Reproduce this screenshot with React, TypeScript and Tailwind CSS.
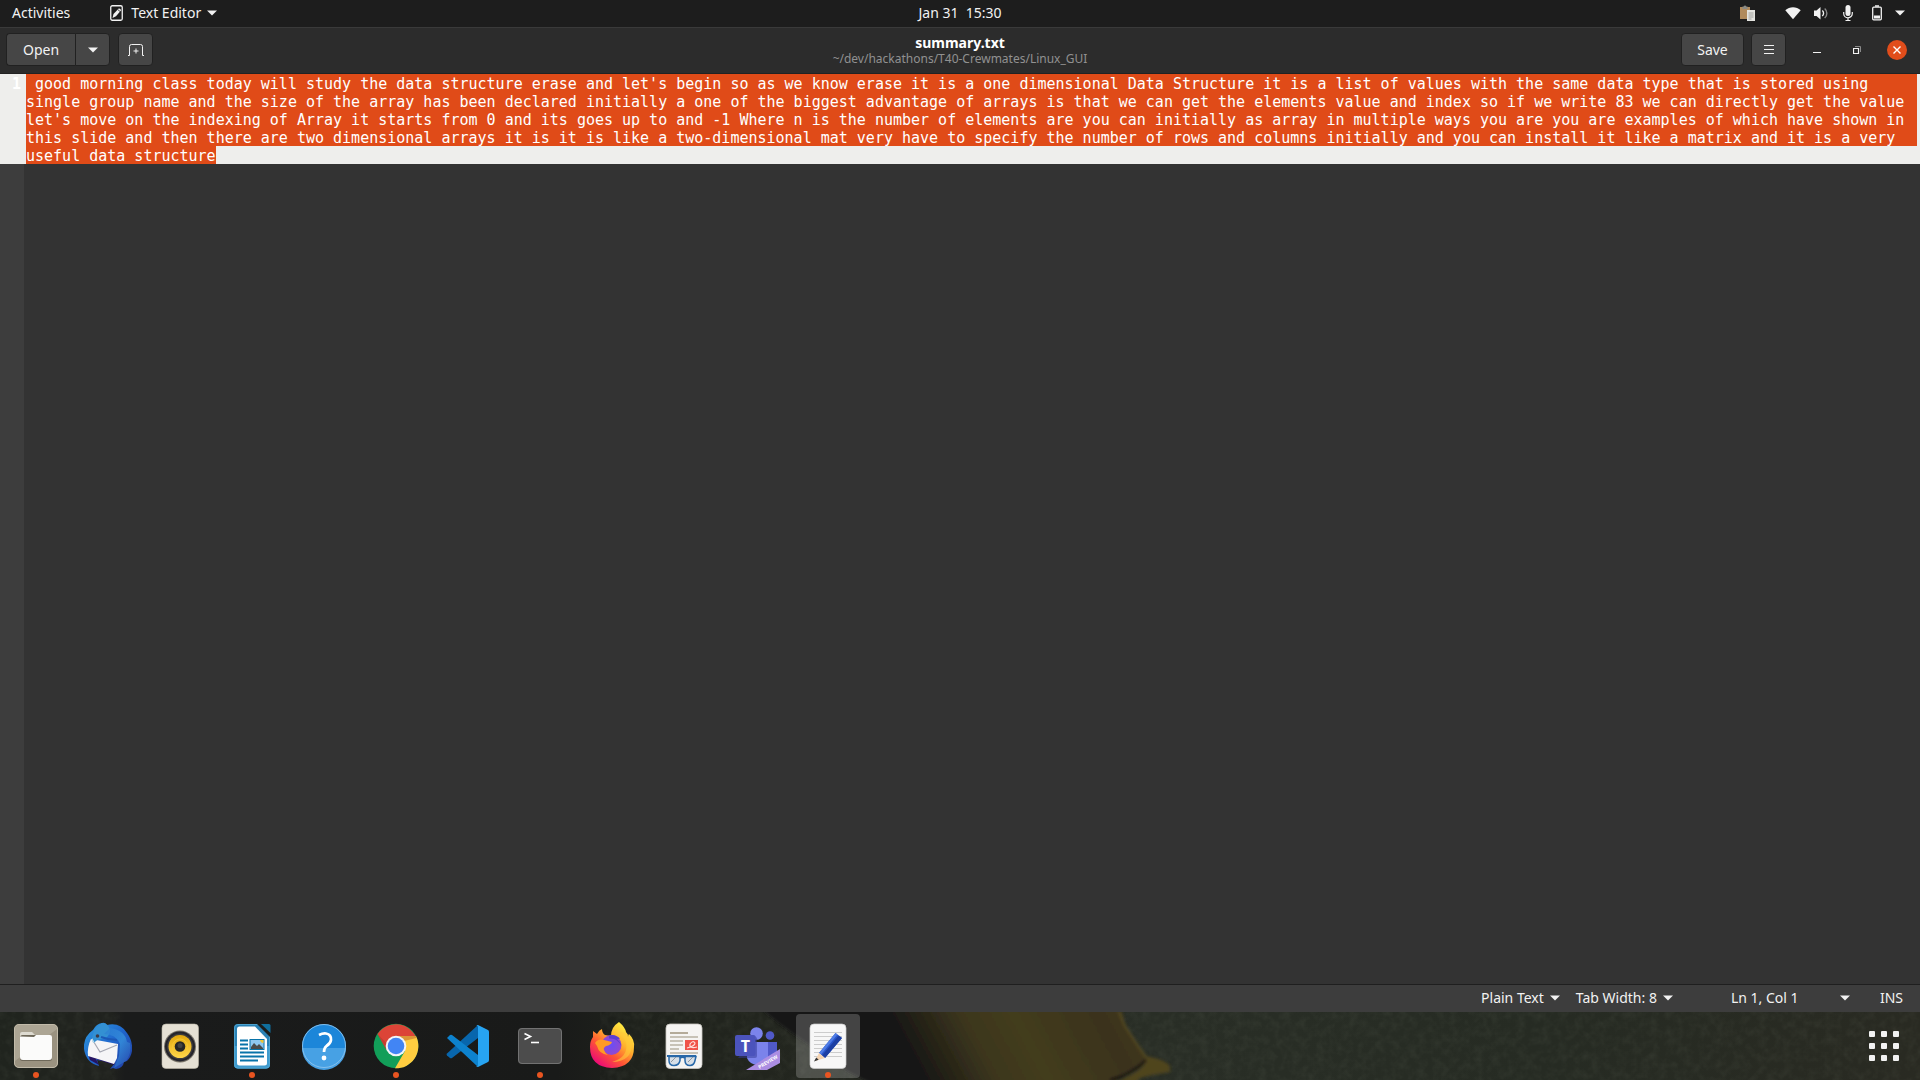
import { useState } from "react";
import type { ReactNode } from "react";

const INITIAL_TEXT =
  " good morning class today will study the data structure erase and let's begin so as we know erase it is a one dimensional Data Structure it is a list of values with the same data type that is stored using single group name and the size of the array has been declared initially a one of the biggest advantage of arrays is that we can get the elements value and index so if we write 83 we can directly get the value let's move on the indexing of Array it starts from 0 and its goes up to and -1 Where n is the number of elements are you can initially as array in multiple ways you are you are examples of which have shown in this slide and then there are two dimensional arrays it is it is like a two-dimensional mat very have to specify the number of rows and columns initially and you can install it like a matrix and it is a very useful data structure";

const Caret = () => (
  <svg width="10" height="6" viewBox="0 0 10 6" className="shrink-0" aria-hidden="true">
    <path d="M0 .5h10L5 5.5z" fill="currentColor" />
  </svg>
);

const TopBar = () => (
  <header className="grid h-7 shrink-0 grid-cols-[1fr_auto_1fr] items-center border-b border-[#3a3a3a] bg-[#1d1d1d] pb-px text-sm text-[#f2f2f2]">
    <div className="flex items-center gap-10 pl-3">
      <button>Activities</button>
      <button className="flex items-center gap-2">
        <svg width="13" height="16" viewBox="0 0 13 16" aria-hidden="true">
          <rect x=".75" y=".75" width="11.5" height="14.5" rx="1.5" fill="none" stroke="#f2f2f2" strokeWidth="1.3" />
          <path d="M2.5 13l1-4L9 3.3 11.3 5 6 11.3z" fill="#f2f2f2" />
          <path d="M8 4.8l2 1.6" stroke="#1d1d1d" strokeWidth=".8" />
        </svg>
        <span className="flex items-center gap-1.5">
          Text Editor
          <Caret />
        </span>
      </button>
    </div>
    <button className="whitespace-pre">Jan 31  15:30</button>
    <div className="flex items-center justify-end pr-[15px]">
      <svg width="15" height="16" viewBox="0 0 15 16" className="mr-[30px]" aria-hidden="true">
        <path d="M0 2h10v12H0z" fill="#b08a5c" />
        <path d="M2.5 1.5h1.2a1.4 1.4 0 012.6 0h1.2V4h-5z" fill="#8a8a84" />
        <path d="M7 5h8v11H7z" fill="#e4e4e0" />
        <path d="M8.5 8h5M8.5 10h5M8.5 12h5M8.5 14h3" stroke="#9a9a96" strokeWidth=".9" />
      </svg>
      <button aria-label="System menu" className="flex items-center">
        <svg width="16" height="16" viewBox="0 0 16 16" className="mr-3" aria-hidden="true">
          <path d="M.3 5.2C4.6 1.3 11.4 1.3 15.7 5.2L8 14.3z" fill="#f2f2f2" />
        </svg>
        <svg width="16" height="16" viewBox="0 0 16 16" className="mr-[14px]" aria-hidden="true">
          <path d="M1 5.5h2.5L7.5 2v12.5L3.500 11H1z" fill="#f2f2f2" />
          <path d="M9.3 5.5a3.6 3.6 0 010 5.5" fill="none" stroke="#f2f2f2" strokeWidth="1.4" />
          <path d="M11.7 3.4a6.5 6.5 0 010 9.7" fill="none" stroke="#8a8a8a" strokeWidth="1.4" />
        </svg>
        <svg width="10" height="16" viewBox="0 0 10 16" className="mr-[18px]" aria-hidden="true">
          <rect x="2.5" y="0" width="5" height="11" rx="2.5" fill="#f2f2f2" />
          <path d="M.7 7v1.5a4.3 4.3 0 008.6 0V7M5 13v2.5M2.5 15.5h5" fill="none" stroke="#f2f2f2" strokeWidth="1.2" />
        </svg>
        <svg width="12" height="16" viewBox="0 0 12 16" className="mr-3" aria-hidden="true">
          <rect x="1.700" y="2.2" width="8.6" height="12.6" rx="1" fill="none" stroke="#f2f2f2" strokeWidth="1.3" />
          <path d="M4 .3h4v1.5H4zM3 10.5h6v3H3z" fill="#f2f2f2" />
        </svg>
        <Caret />
      </button>
    </div>
  </header>
);

const BUTTON = "flex h-[33px] items-center justify-center border border-[#212121] bg-[#464646] text-[#f2f2f2]";

const HeaderBar = () => (
  <div className="grid h-[46px] shrink-0 grid-cols-[1fr_auto_1fr] border-b border-[#222] bg-[#2c2c2c] text-sm">
    <div className="flex items-start gap-2 pt-[5px] pl-1.5">
      <div className="flex">
        <button className={`${BUTTON} w-[69px] rounded-l border-r-0`}>Open</button>
        <button className={`${BUTTON} w-[35px] rounded-r`} aria-label="Recent files">
          <Caret />
        </button>
      </div>
      <button className={`${BUTTON} w-[35px] rounded`} aria-label="New tab">
        <svg width="16" height="14" viewBox="0 0 16 14" fill="none" stroke="#f2f2f2" aria-hidden="true">
          <path d="M0 12.5h1.5v-9a2 2 0 012-2h9a2 2 0 012 2v9H16M8 5.5v5M5.5 8h5" />
        </svg>
      </button>
    </div>
    <div className="pt-[6px] text-center">
      <h1 className="text-sm/[18px] font-bold text-white">summary.txt</h1>
      <p className="text-xs/[14px] text-[#919191]">~/dev/hackathons/T40-Crewmates/Linux_GUI</p>
    </div>
    <div className="flex items-start justify-end pt-[5px] pr-[13px]">
      <button className={`${BUTTON} mr-[7px] w-[63px] rounded`}>Save</button>
      <button className={`${BUTTON} mr-[21px] w-[35px] rounded`} aria-label="Menu">
        <svg width="10" height="11" viewBox="0 0 10 11" stroke="#f2f2f2" aria-hidden="true">
          <path d="M0 1.5h10M0 5.5h10M0 9.5h10" />
        </svg>
      </button>
      <div className="flex h-[33px] items-center gap-5">
        <button className="flex size-5 items-center justify-center" aria-label="Minimize">
          <svg width="8" height="8" viewBox="0 0 8 8" aria-hidden="true">
            <path d="M0 6.5h8" stroke="#f2f2f2" />
          </svg>
        </button>
        <button className="flex size-5 items-center justify-center" aria-label="Restore">
          <svg width="8" height="8" viewBox="0 0 8 8" fill="none" aria-hidden="true">
            <path d="M2 .5h5.5V6" stroke="#8a8a8a" />
            <path d="M.5 2.5h5v5h-5z" stroke="#f2f2f2" strokeWidth="1.2" />
          </svg>
        </button>
        <button className="flex size-5 items-center justify-center rounded-full bg-[#e14d1b]" aria-label="Close">
          <svg width="8" height="8" viewBox="0 0 8 8" aria-hidden="true">
            <path d="M.5.5l7 7M7.5.5l-7 7" stroke="#fff" strokeWidth="1.4" />
          </svg>
        </button>
      </div>
    </div>
  </div>
);

const Editor = () => {
  const [text, setText] = useState(INITIAL_TEXT);

  return (
    <main className="flex min-h-0 flex-1 flex-col bg-[#333]">
      <div className="flex bg-[#eeeeec] font-['DejaVu_Sans_Mono','Liberation_Mono',monospace] text-[15px]/[18px]">
        <div className="w-[26px] shrink-0 pt-px pr-[5px] text-right font-bold text-white">1</div>
        <div className="grid flex-1">
          {/* selection highlight: full lines, then the last partial one */}
          <div className="col-start-1 row-start-1 flex flex-col pr-[3px]" aria-hidden="true">
            <div className="flex-1 bg-[#e04b18]" />
            <div className="h-[18px] w-[21ch] bg-[#e04b18]" />
          </div>
          <textarea
            aria-label="Document"
            rows={5}
            spellCheck={false}
            value={text}
            onChange={(e) => setText(e.target.value)}
            className="col-start-1 row-start-1 block h-[90px] w-full resize-none overflow-hidden bg-transparent pt-px text-white outline-none"
          />
        </div>
      </div>
      <div className="w-6 flex-1 bg-[#3d3d3d]" />
    </main>
  );
};

const StatusBar = () => (
  <footer className="flex h-7 shrink-0 items-center justify-end border-t border-[#1f1f1f] bg-[#3d3d3d] pr-[17px] pb-0.5 text-sm text-[#f2f2f2]">
    <button className="mr-4 flex items-center gap-1.5">
      Plain Text
      <Caret />
    </button>
    <button className="mr-[58px] flex items-center gap-1.5">
      Tab Width: 8
      <Caret />
    </button>
    <button className="mr-[30px] flex w-[119px] items-center justify-between">
      Ln 1, Col 1
      <Caret />
    </button>
    <span>INS</span>
  </footer>
);

const Wallpaper = () => (
  <svg
    className="absolute inset-0 size-full"
    viewBox="0 0 1920 68"
    preserveAspectRatio="none"
    aria-hidden="true"
  >
    <defs>
      <linearGradient id="ground">
        <stop offset="0" stopColor="#20241e" />
        <stop offset=".058" stopColor="#20221e" />
        <stop offset=".065" stopColor="#1a1b1b" />
        <stop offset=".29" stopColor="#191a19" />
        <stop offset=".33" stopColor="#1f221c" />
        <stop offset=".42" stopColor="#23261f" />
        <stop offset=".6" stopColor="#292e26" />
        <stop offset=".8" stopColor="#262b23" />
        <stop offset="1" stopColor="#292a22" />
      </linearGradient>
      <linearGradient id="sleeve" x1="895" y1="50" x2="1120" y2="-70" gradientUnits="userSpaceOnUse">
        <stop offset="0" stopColor="#141414" />
        <stop offset=".08" stopColor="#191813" />
        <stop offset=".32" stopColor="#3c361e" />
        <stop offset=".5" stopColor="#433c1f" />
        <stop offset=".8" stopColor="#3a321d" />
        <stop offset="1" stopColor="#4a401f" />
      </linearGradient>
      <filter id="grain" x="0" y="0" width="100%" height="100%">
        <feTurbulence type="fractalNoise" baseFrequency=".12" numOctaves="3" seed="4" />
        <feColorMatrix values="0 0 0 0 .5  0 0 0 0 .55  0 0 0 0 .42  .6 0 0 0 -.22" />
      </filter>
      <filter id="soften">
        <feGaussianBlur stdDeviation="1.5" />
      </filter>
    </defs>
    <rect width="1920" height="68" fill="url(#ground)" />
    <rect width="120" height="68" filter="url(#grain)" opacity=".2" />
    <rect x="600" width="1320" height="68" filter="url(#grain)" opacity=".2" />
    <g filter="url(#soften)">
      <path d="M760-4h160v78h-40q-32-10-56-32-34-20-64-46z" fill="#141414" />
      <path d="M875-6h246l4 18 11 18 12 16-10 8-28 18H870z" fill="url(#sleeve)" />
      <path d="M1112 72q24-10 32-19l2-9q20 4 24 10v6l-18 3-12 3-6 8z" fill="#4f441f" />
      <path d="M1110 68q22-6 36-20" fill="none" stroke="#1c1911" strokeWidth="3" />
      <path d="M1119 0l6 14 12 18 9 13" fill="none" stroke="#554b24" strokeWidth="2" />
    </g>
  </svg>
);

const FilesIcon = () => (
  <>
    <rect x="2" y="2" width="44" height="44" rx="5" fill="#9a9280" />
    <path d="M7 3h34a4 4 0 014 4L3 39V7a4 4 0 014-4z" fill="#aca594" />
    <rect x="2.5" y="2.5" width="43" height="43" rx="4.5" fill="none" stroke="#c1baa9" />
    <path d="M8 16v-4q0-2 2-2h10l4 4h14v8H8z" fill="#dedbd1" />
    <rect x="8" y="13" width="32" height="26" rx="2.5" fill="#6e6859" />
    <path d="M8 14.5L22 15l2-2h14q2 0 2 2v20q0 3-3 3H11q-3 0-3-3z" fill="#fbfbfa" />
  </>
);

const ThunderbirdIcon = () => (
  <>
    <defs>
      <linearGradient id="tb" x1="0" y1="0" x2="1" y2="1">
        <stop offset="0" stopColor="#2f9fe2" />
        <stop offset=".5" stopColor="#1f65cc" />
        <stop offset="1" stopColor="#233a9e" />
      </linearGradient>
      <linearGradient id="tbWing" x1="0" y1="0" x2="1" y2="1">
        <stop offset="0" stopColor="#2a76cf" />
        <stop offset=".5" stopColor="#3b9be0" />
        <stop offset="1" stopColor="#2749b0" />
      </linearGradient>
    </defs>
    <path d="M18 1q3-1 5 2 13-3 20 8 6 8 5 18-1 6-5 10l-3 1q-1 6-8 7l-3-1-3 1 5-6-18-3 2 6Q2 41 0 27-1 15 9 8q3-6 9-7z" fill="url(#tb)" />
    <path d="M4 32l2 6 9 5-3-6 18 6 1-3z" fill="#251463" />
    <path d="M7 17l27 5-1 14-3 6L4 34q-1-9 3-17z" fill="#f5f5f7" />
    <path d="M8 17l8 13 17-7" fill="none" stroke="#a6a8b3" strokeWidth="1.2" />
    <path d="M18 1q7 0 8 8-1 7-8 8-5 0-8 4-3-4-1-9 2-7 9-11z" fill="#3390d3" />
    <path d="M20 12q12 0 16 10l-1 12-5 12 12-7q6-8 4-18l-3-1Q41 8 26 6z" fill="url(#tbWing)" opacity=".65" />
    <path d="M17 15q8 3 16 3" fill="none" stroke="#1c58b6" strokeWidth="2" />
    <circle cx="13.5" cy="14" r="1.8" fill="#3c3a48" />
    <path d="M8 16l3 5-3-1z" fill="#bddbea" />
  </>
);

const RhythmboxIcon = () => (
  <>
    <defs>
      <linearGradient id="cone" x1="0" y1="0" x2="0" y2="1">
        <stop offset="0" stopColor="#e3a80d" />
        <stop offset="1" stopColor="#ffd64b" />
      </linearGradient>
    </defs>
    <rect x="6" y="2" width="36.5" height="44.5" rx="4" fill="#e5e0d4" stroke="#bdb8aa" strokeWidth=".6" />
    <circle cx="24" cy="24.500" r="16" fill="#777267" />
    <circle cx="24" cy="24.500" r="15" fill="#24242c" />
    <circle cx="24" cy="24.500" r="13" fill="#3d3b3c" />
    <circle cx="24" cy="24.500" r="11.500" fill="url(#cone)" />
    <circle cx="24" cy="24.500" r="7.500" fill="none" stroke="#f7ca36" strokeWidth=".8" />
    <circle cx="24" cy="24.500" r="5.300" fill="#262626" />
    <circle cx="24" cy="23.500" r="2.500" fill="#434343" />
  </>
);

const WriterIcon = () => (
  <>
    <rect x="6" y="2" width="36" height="44.5" rx="4" fill="#2a82b6" />
    <path d="M6 24h36v18q0 4.5-4 4.5H10q-4 0-4-4.5z" fill="#409bce" />
    <rect x="6.5" y="2.5" width="35" height="43.5" rx="3.5" fill="none" stroke="#55a9d4" strokeWidth=".8" />
    <path d="M28 1l15 15V8l-9-7z" fill="#1b1c1b" />
    <path d="M33 2h8q1.5 0 1.5 1.5V11z" fill="#106f9e" />
    <path d="M9 7q0-2.5 2.5-2.5H27L39 17v24q0 2.5-2.5 2.5h-25Q9 43.5 9 41z" fill="#fff" />
    <path d="M12 18.5h8M12 22.5h8M12 26.5h8M12 30.5h24M12 34.5h24M12 38.5h18" stroke="#0873a9" strokeWidth="1.8" />
    <rect x="22" y="17.5" width="14" height="10" fill="#8fc7ef" stroke="#0873a9" />
    <path d="M23 27v-2l3-4 3 3 2-2 4 4v1z" fill="#4a4a4a" />
    <path d="M32 18h3.5v3q-3 0-3.5-3z" fill="#f3c52c" />
  </>
);

const HelpIcon = () => (
  <>
    <circle cx="24" cy="24" r="22" fill="#1c86d9" />
    <path d="M2 26h44a22 22 0 01-44 0z" fill="#47a1e4" />
    <circle cx="24" cy="24" r="21.5" fill="none" stroke="#8cc3ec" strokeWidth=".9" />
    <path d="M19 13q4-2 7-1.5 5.500 1 5 6.5-.5 3.5-4.5 6-2.5 2-2.5 6" fill="none" stroke="#fff" strokeWidth="2.7" />
    <circle cx="24" cy="36" r="2.4" fill="#fff" />
  </>
);

const ChromeIcon = () => (
  <>
    <circle cx="24" cy="24" r="22.3" fill="#129e59" />
    <path d="M24 14h20a22.3 22.3 0 01-21 32.300l10-17.300z" fill="#ffcd40" />
    <path d="M5.5 12a22.3 22.3 0 0138 2H24l-9.500 14z" fill="#dc4437" />
    <path d="M24 14h19.7l.8 2-12.500 3zM5.5 12l9 16 1-6z" fill="#9a3127" opacity=".35" />
    <circle cx="24" cy="24" r="10.3" fill="#f3f5f8" />
    <circle cx="24" cy="24" r="8.3" fill="#4285f4" />
  </>
);

const CodeIcon = () => (
  <>
    <path d="M34 3v13L8 36q-1 .6-2 0l-3-2.5q-1-1 0-2z" fill="#0866ad" />
    <path d="M3 16l3-3q1-.7 2 0L34 33v12z" fill="#0d82ce" />
    <path d="M34 3l10 5q1 .6 1 2v28q0 1.4-1 2l-10 5q-1 .4-2-.6 2 .7 2-1.4V5q0-2-2-1.4 1-1 2-.6z" fill="#27a4f2" />
  </>
);

const TerminalIcon = () => (
  <>
    <rect x="2" y="6" width="44" height="36" rx="4" fill="#4c4c4c" />
    <rect x="2.5" y="6.5" width="43" height="35" rx="3.5" fill="none" stroke="#727272" />
    <path d="M8.5 11.5l6 3-6 3" fill="none" stroke="#fff" strokeWidth="1.6" />
    <path d="M15 20.5h8" stroke="#fff" strokeWidth="1.6" />
  </>
);

const FirefoxIcon = () => (
  <>
    <defs>
      <linearGradient id="fx" x1=".85" y1=".1" x2=".2" y2=".95">
        <stop offset="0" stopColor="#fff044" />
        <stop offset=".35" stopColor="#ffb22d" />
        <stop offset=".65" stopColor="#ff5634" />
        <stop offset="1" stopColor="#eb0878" />
      </linearGradient>
      <radialGradient id="fxGlobe">
        <stop offset="0" stopColor="#6b4df5" />
        <stop offset="1" stopColor="#9249cf" />
      </radialGradient>
    </defs>
    <path d="M31 0q6 5 7 10 2 2 2 5l1-3q6 6 5 13 0 20-22 21Q2 45 2 25q0-6 3-10V9l4 3q2-4 5-5 0 4 3 6l6 1q0-9 8-14z" fill="url(#fx)" />
    <path d="M25 12q9-2 13 8 3 15-14 20 20 0 20-19-1-8-6-10-7-2-13 1z" fill="#ffc93a" opacity=".6" />
    <circle cx="23.5" cy="23" r="10" fill="url(#fxGlobe)" />
    <path d="M21 13.500q6-2 11 3l-3 1q4 3 4 6-4-8-12-7z" fill="#5a3fd0" />
    <path d="M7 21q3-5 9-3l8 2q-1 3-6 4-3 2-2 4 1 3 4 5-9-1-11-9z" fill="#ff9a25" />
  </>
);

const DocumentViewerIcon = () => (
  <>
    <rect x="6" y="2" width="36" height="44.5" rx="4" fill="#f5f4f2" stroke="#c9c7c2" strokeWidth=".8" />
    <path d="M10 11h18" stroke="#b4ab99" strokeWidth="2" />
    <path d="M10 15h28M10 19h13M10 23h13M10 27h9M10 31h28" stroke="#c7c2b6" strokeWidth="1.8" />
    <rect x="25" y="18" width="13" height="10" fill="#f05349" />
    <path d="M27 26q8-2 8-5-2-3-5 1-1 5 7 3" fill="none" stroke="#ffe0dc" strokeWidth="1.2" />
    <path d="M9 34.500h11v4q-1 5-6 5t-5-5zM25 34.500h11l-1 4q-1 5-5 5-5 0-5-5z" fill="#d7dfe7" stroke="#2868a8" strokeWidth="1.5" />
    <path d="M7 34h29M20 36q2.500-2 5 0" fill="none" stroke="#2868a8" strokeWidth="1.8" />
    <path d="M11 40l5-5M28 40l5-5" stroke="#90979e" />
  </>
);

const TeamsIcon = () => (
  <>
    <circle cx="24.5" cy="11.5" r="6.3" fill="#7b83eb" />
    <circle cx="38" cy="13.5" r="4.3" fill="#5059c9" />
    <path d="M30 20h15v14q-1 5-8 5h-7z" fill="#5059c9" />
    <path d="M15 20h21v15q-1 8-10 8-8 0-11-7z" fill="#7b83eb" />
    <path d="M23 14l2 2v18q0 2-2 2H6z" fill="#343a96" opacity=".5" />
    <rect x="3" y="13" width="20.5" height="21" rx="2" fill="#4b53bc" />
    <text x="13.3" y="29.5" textAnchor="middle" fontSize="16" fontWeight="700" fill="#fff" fontFamily="Open Sans, sans-serif">
      T
    </text>
    <path d="M48 27v14l-13 7H14z" fill="#ab8de2" />
    <text x="36" y="41.5" textAnchor="middle" fontSize="5" fontWeight="700" fill="#fff" fontFamily="Open Sans, sans-serif" transform="rotate(-31 36 40)">
      PREVIEW
    </text>
  </>
);

const TextEditorIcon = () => (
  <>
    <rect x="6" y="2" width="36" height="44.5" rx="4" fill="#f7f7f7" stroke="#ccc" strokeWidth=".7" />
    <path d="M10 10.5h28M10 14.5h28M10 18.5h28M10 22.5h28M10 26.5h28M10 30.5h28M10 34.5h28" stroke="#ccc" />
    <path d="M15 31L31.5 11l6.500 5L21 36z" fill="#2956cb" />
    <path d="M18 33.5L34.7 13.500l3.300 2.500L21 36z" fill="#1c3fa3" />
    <path d="M15 31L31.5 11l2 1.500L17 32.500z" fill="#4f7ce5" />
    <path d="M15 31l6 5-10 3z" fill="#f4d4b2" />
    <path d="M12.2 35.5l2.500 2.300L10 39.500z" fill="#333" />
  </>
);

type DockApp = { name: string; icon: ReactNode; running?: boolean; active?: boolean };

const APPS: DockApp[] = [
  { name: "Files", icon: <FilesIcon />, running: true },
  { name: "Thunderbird Mail", icon: <ThunderbirdIcon /> },
  { name: "Rhythmbox", icon: <RhythmboxIcon /> },
  { name: "LibreOffice Writer", icon: <WriterIcon />, running: true },
  { name: "Help", icon: <HelpIcon /> },
  { name: "Google Chrome", icon: <ChromeIcon />, running: true },
  { name: "Visual Studio Code", icon: <CodeIcon /> },
  { name: "Terminal", icon: <TerminalIcon />, running: true },
  { name: "Firefox", icon: <FirefoxIcon /> },
  { name: "Document Viewer", icon: <DocumentViewerIcon /> },
  { name: "Microsoft Teams", icon: <TeamsIcon /> },
  { name: "Text Editor", icon: <TextEditorIcon />, running: true, active: true },
];

const Dock = () => (
  <nav className="relative h-[68px] shrink-0 overflow-hidden bg-[#1b1c1b]" aria-label="Dock">
    <Wallpaper />
    <div className="relative flex h-full items-center justify-between pr-[21px] pl-1">
      <div className="flex gap-2">
        {APPS.map((app) => (
          <button
            key={app.name}
            aria-label={app.name}
            className={`relative flex size-16 items-center justify-center rounded ${app.active ? "bg-white/20" : ""}`}
          >
            <svg width="48" height="48" viewBox="0 0 48 48">
              {app.icon}
            </svg>
            {app.running && <span className="absolute bottom-0 size-1.5 rounded-full bg-[#e95420]" />}
          </button>
        ))}
      </div>
      <button className="grid grid-cols-3 gap-1.5" aria-label="Show Applications">
        {Array.from({ length: 9 }, (_, i) => (
          <span key={i} className="size-1.5 rounded-[1px] bg-[#f2f2f2]" />
        ))}
      </button>
    </div>
  </nav>
);

const App = () => (
  <div className="flex h-screen flex-col overflow-hidden font-['Noto_Sans','Open_Sans',sans-serif]">
    <TopBar />
    <HeaderBar />
    <Editor />
    <StatusBar />
    <Dock />
  </div>
);

export default App;
